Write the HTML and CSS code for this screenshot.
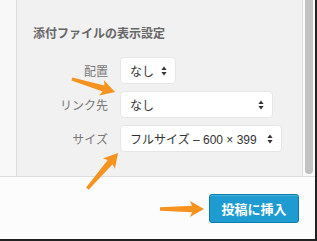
FILE: index.html
```html
<!DOCTYPE html>
<html lang="ja">
<head>
  <meta charset="UTF-8" />
  <title>添付ファイルの表示設定</title>
  <link rel="stylesheet" href="styles.css">
</head>
<body>
  <div class="modal">
    <div class="frame">
      <div class="gutter"></div>

      <!-- Attachment display settings -->
      <aside class="sidebar">
        <h2>添付ファイルの表示設定</h2>
        <div class="settings">
          <span class="label">配置</span>
          <div class="select select-sm">なし<svg class="caret" width="6" height="10" viewBox="0 0 6 10"><path d="M3 0.5 L5.6 4 L0.4 4 Z M3 9.5 L5.6 6 L0.4 6 Z"/></svg></div>

          <span class="label">リンク先</span>
          <div class="select select-md">なし<svg class="caret" width="6" height="10" viewBox="0 0 6 10"><path d="M3 0.5 L5.6 4 L0.4 4 Z M3 9.5 L5.6 6 L0.4 6 Z"/></svg></div>

          <span class="label">サイズ</span>
          <div class="select select-lg">フルサイズ – 600 × 399<svg class="caret" width="6" height="10" viewBox="0 0 6 10"><path d="M3 0.5 L5.6 4 L0.4 4 Z M3 9.5 L5.6 6 L0.4 6 Z"/></svg></div>
        </div>
      </aside>

      <div class="scroll-track"><div class="scroll-thumb"></div></div>
    </div>

    <div class="toolbar">
      <button class="btn-primary">投稿に挿入</button>
    </div>
  </div>

  <!-- Orange pointer arrows drawn over the screenshot -->
  <svg class="arrows" width="317" height="241" viewBox="0 0 317 241">
    <g fill="#f6931f">
      <polygon transform="translate(115 92) rotate(16.8)" points="-45,-1.6 -12,-3.2 -14,-8 0,0 -14,8 -12,3.2 -45,1.6"/>
      <polygon transform="translate(118 153) rotate(-49.3)" points="-47,-1.6 -12,-3.2 -14,-8 0,0 -14,8 -12,3.2 -47,1.6"/>
      <polygon transform="translate(204 209)" points="-44,-1.8 -12,-3.2 -14,-8 0,0 -14,8 -12,3.2 -44,1.8"/>
    </g>
  </svg>
</body>
</html>
```

FILE: styles.css
```css
:root {
  --panel: #f1f1f1;
  --line: #dddddd;
  --label: #666;
  --text: #333;
  --blue: #1e9bd0;
  --orange: #f6931f;
}

* {
  box-sizing: border-box;
  margin: 0;
  padding: 0;
}

body {
  width: 317px;
  height: 241px;
  overflow: hidden;
  background: #222;
  font-family: "Liberation Sans", "Noto Sans CJK JP", sans-serif;
  position: relative;
}

.modal {
  width: 315px;
  height: 239px;
  display: flex;
  flex-direction: column;
  background: #fcfcfc;
}

.frame {
  height: 177px;
  display: flex;
  border-bottom: 1px solid var(--line);
}

.gutter {
  width: 17px;
  background: #f8f8f8;
  border-right: 1px solid var(--line);
}

.sidebar {
  width: 286px;
  background: var(--panel);
  border-right: 1px solid var(--line);
  padding: 26px 0 0 16px;
}

h2 {
  font-size: 12px;
  line-height: 16px;
  font-weight: bold;
  color: var(--label);
  margin-bottom: 15px;
}

.settings {
  display: grid;
  grid-template-columns: 75px auto;
  column-gap: 12px;
  row-gap: 7px;
  align-items: center;
  justify-items: start;
}

.label {
  justify-self: end;
  font-size: 12px;
  color: #777;
}

.select {
  height: 27px;
  display: flex;
  align-items: center;
  justify-content: space-between;
  padding: 0 8px 0 9px;
  background: #fff;
  border: 1px solid #e6e6e6;
  border-radius: 4px;
  font-size: 12px;
  color: var(--text);
  white-space: nowrap;
}

.select-sm { width: 56px; }
.select-md { width: 153px; }
.select-lg { width: 162px; }

.caret {
  fill: #333;
  flex-shrink: 0;
}

.scroll-track {
  flex: 1;
  background: #fafafa;
  padding-left: 2px;
}

.scroll-thumb {
  width: 8px;
  height: 174px;
  background: #c2c2c2;
  border-radius: 0 0 4px 4px;
}

.toolbar {
  flex: 1;
  display: flex;
  align-items: center;
  justify-content: flex-end;
  padding-right: 16px;
}

.btn-primary {
  width: 90px;
  height: 29px;
  background: var(--blue);
  border: 1px solid #0b7bab;
  border-radius: 3px;
  box-shadow: inset 0 1px 0 rgba(120, 200, 230, 0.5);
  color: #fff;
  font-family: inherit;
  font-size: 13px;
  font-weight: bold;
}

.arrows {
  position: absolute;
  left: 0;
  top: 0;
  pointer-events: none;
}
```
